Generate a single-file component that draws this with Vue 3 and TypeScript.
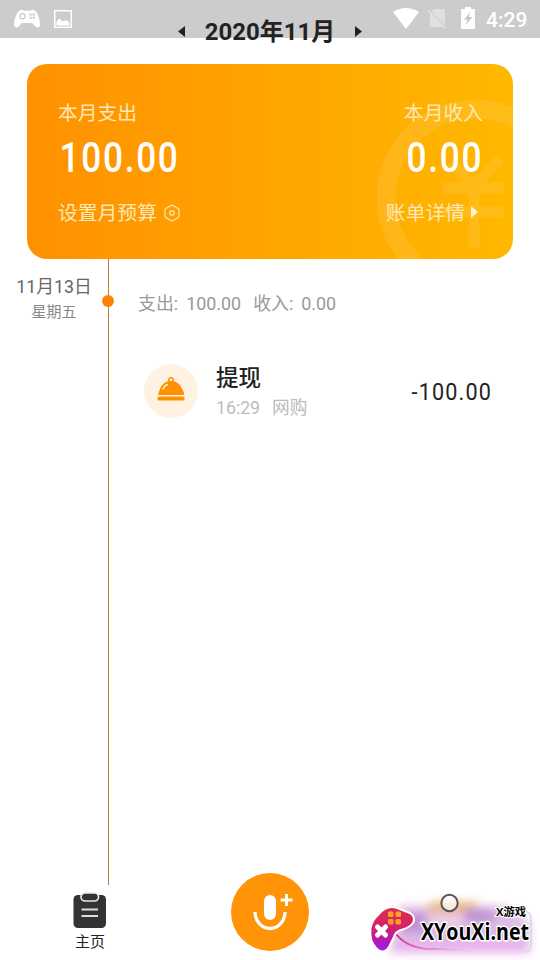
<script setup lang="ts">
interface Entry { title: string; time: string; category: string; amount: string }
const month = '2020年11月'
const entries: Entry[] = [{ title: '提现', time: '16:29', category: '网购', amount: '-100.00' }]
</script>

<template>
  <div class="screen">
    <header class="status">
      <div class="status-left">
        <svg width="28" height="20" viewBox="0 0 28 20"><path fill="#fff" d="M6 2Q7 .5 9 .8L11 1.800H17L19 .8Q21 .5 22.500 2C25 5 27 11 27 15.500C27 19 24 19.500 22 17L19 14H9L6 17C4 19.500 1 19 1 15.500C1 11 3 5 6 2Z"/><circle cx="9.500" cy="7.200" r="2.600" fill="none" stroke="#ccc" stroke-width="1.300"/><g fill="#ccc"><circle cx="17.500" cy="5.500" r="1.200"/><circle cx="20.800" cy="5.500" r="1.200"/><circle cx="17.500" cy="8.800" r="1.200"/><circle cx="20.800" cy="8.800" r="1.200"/></g></svg>
        <svg width="20" height="20" viewBox="0 0 20 20"><rect x="1.700" y="1.700" width="16.600" height="16.600" fill="none" stroke="#fff" stroke-width="1.500"/><path fill="#fff" d="M3.500 16.500V12.500L6.500 9.500L9.500 12.500L13 11L16.500 13.500V16.500Z"/></svg>
      </div>
      <div class="month">
        <svg width="7" height="11" viewBox="0 0 7 11"><path fill="#222" d="M7 0V11L0 5.500Z"/></svg>
        <h1>{{ month }}</h1>
        <svg width="7" height="11" viewBox="0 0 7 11"><path fill="#222" d="M0 0V11L7 5.500Z"/></svg>
      </div>
      <div class="status-right">
        <svg class="wifi" width="26" height="21" viewBox="0 0 26 21"><path fill="#fff" d="M0 4Q13-4 26 4L13 21Z"/></svg>
        <svg class="sim" width="20" height="21" viewBox="0 0 20 21"><path fill="#e0e0e0" d="M7 1H17Q18 1 18 2V17L4.500 3.500ZM3 5L17 19H4Q3 19 3 18Z"/><path d="M1 2L18 20" stroke="#e0e0e0" stroke-width="1.500"/></svg>
        <svg class="battery" width="14" height="22" viewBox="0 0 14 22"><path fill="#fff" d="M4 0H10V2H13Q14 2 14 3V21Q14 22 13 22H1Q0 22 0 21V3Q0 2 1 2H4Z"/><path fill="#c4c4c4" d="M9.500 5L3 12.500H6.500L4.500 18L11.500 10H7.800Z"/></svg>
        <span>4:29</span>
      </div>
    </header>

    <section class="card">
      <svg class="coin" width="140" height="160" viewBox="0 0 140 160"><circle cx="98" cy="99" r="89" fill="none" stroke="#fff" stroke-width="19"/><path d="M74 63L97 87L123 60M66 89H127M66 113H127M97 87V149" fill="none" stroke="#fff" stroke-width="11"/></svg>
      <div class="card-col">
        <p>本月支出</p>
        <svg class="sum" width="122" height="42" viewBox="0 0 122 42"><text transform="translate(1.500 36) scale(.84 1)">100.00</text></svg>
        <p class="link">设置月预算<svg class="gear" width="18" height="18" viewBox="0 0 18 18"><path d="M8 1.500Q9 1 10 1.500L15 4.300Q16 5 16 6V12Q16 13 15 13.700L10 16.500Q9 17 8 16.500L3 13.700Q2 13 2 12V6Q2 5 3 4.300Z"/><circle cx="9" cy="9" r="2.200"/></svg></p>
      </div>
      <div class="card-col right">
        <p>本月收入</p>
        <svg class="sum" width="78" height="42" viewBox="0 0 78 42"><text transform="translate(1.500 36) scale(.84 1)">0.00</text></svg>
        <p class="link">账单详情<svg class="more" width="7" height="12" viewBox="0 0 7 12"><path fill="#fff4d5" d="M0 0L7 6L0 12Z"/></svg></p>
      </div>
    </section>

    <main class="timeline">
      <aside class="day"><strong>11月13日</strong><span>星期五</span></aside>
      <div class="axis"><i></i></div>
      <section class="records">
        <div class="totals"><span>支出:</span><span>100.00</span><span class="income">收入:</span><span>0.00</span></div>
        <article v-for="entry in entries" :key="entry.time" class="entry">
          <div class="avatar"><svg width="28" height="24" viewBox="0 0 28 24"><circle cx="14" cy="3" r="2.200" fill="none" stroke="#ff9100" stroke-width="1.500"/><path fill="#ff9100" d="M1 18Q2 14 3 12Q6 4 14 4T25 12Q27 14 27 18Z"/><rect x=".5" y="19.500" width="27" height="4" rx="1.500" fill="#ff9100"/><path d="M6 12Q7.500 8.500 10.500 7.500" fill="none" stroke="#fff2df" stroke-width="1.400" stroke-linecap="round"/></svg></div>
          <div class="detail"><h2>{{ entry.title }}</h2><p><span>{{ entry.time }}</span><span>{{ entry.category }}</span></p></div>
          <svg class="price" width="82" height="28" viewBox="0 0 82 28"><text transform="translate(1.500 22) scale(.9 1)">{{ entry.amount }}</text></svg>
        </article>
      </section>
    </main>

    <nav class="tabs">
      <a class="home">
        <svg width="34" height="37" viewBox="0 0 34 37"><rect x=".5" y="3" width="32.500" height="33" rx="4.500" fill="#333335"/><rect x="8" y="1" width="17.500" height="8" rx="4" fill="#333335" stroke="#e8e8e8" stroke-width="1.700"/><path d="M8.500 17.500H25M8.500 24H25" stroke="#ddd" stroke-width="2"/></svg>
        <span>主页</span>
      </a>
      <button class="voice" aria-label="add"><svg width="78" height="78" viewBox="0 0 78 78"><rect x="33" y="22" width="12" height="25" rx="6" fill="#fff"/><path d="M24 39A15 16.500 0 0 0 54 39" fill="none" stroke="#fff" stroke-width="3.300"/><path d="M55.500 21V33M49.500 27H61.500" stroke="#fff" stroke-width="2.800"/></svg></button>
      <div class="profile">
        <svg width="180" height="80" viewBox="0 0 180 80">
          <defs>
            <filter id="soft" x="-20%" y="-50%" width="140%" height="200%"><feGaussianBlur stdDeviation="5"/></filter>
            <linearGradient id="pad" x1="0" y1="0" x2="0" y2="1"><stop offset="0" stop-color="#dc304b"/><stop offset=".45" stop-color="#d6206a"/><stop offset="1" stop-color="#9a18f0"/></linearGradient>
            <linearGradient id="line"><stop offset="0" stop-color="#d22c78"/><stop offset="1" stop-color="#e6a5f5" stop-opacity="0"/></linearGradient>
          </defs>
          <g filter="url(#soft)"><path fill="#dfbde6" d="M40 26H145L170 42V73H30L34 50Z"/><path fill="#eab477" d="M72 22H117V32H65Z"/><path fill="#bd93d6" d="M42 33H66V53H42ZM104 29H134V43H104Z"/><path fill="#e7b2ed" d="M40 59H164V73H30Z"/><path fill="#f1cfdf" d="M70 35H104V46H70Z"/></g>
          <path d="M165 31Q171 32 171 39V65Q171 72 164 72" fill="none" stroke="#ddd4df" stroke-width="1.500"/>
          <circle cx="89.500" cy="23" r="8.200" fill="#fff" fill-opacity=".65" stroke="#59565a" stroke-width="2"/>
          <path d="M36 54Q48 69 72 69T115 72" fill="none" stroke="url(#line)" stroke-width="2"/>
          <path fill="url(#pad)" stroke="#fff" stroke-width="2" stroke-linejoin="round" d="M19 34Q26 25 36 27.500L50 33Q56 37 53 43Q49 48 41 50Q35 52 34 57L29 67Q24 75 17 69Q9 62 10.500 48Q12 40 19 34Z"/>
          <g fill="#ffa126"><rect x="28" y="31.500" width="5.500" height="5.500" rx="1.500"/><rect x="35.500" y="31.500" width="5.500" height="5.500" rx="1.500"/><rect x="28" y="39" width="5.500" height="5.500" rx="1.500"/><rect x="35.500" y="39" width="5.500" height="5.500" rx="1.500"/></g>
          <path d="M17.500 47L25.500 55M25.500 47L17.500 55" stroke="#fff" stroke-width="5" stroke-linecap="round"/>
          <text class="brand" x="61" y="60" textLength="108" lengthAdjust="spacingAndGlyphs">XYouXi.net</text>
          <text class="brand-small" x="136" y="36" textLength="30" lengthAdjust="spacingAndGlyphs">X游戏</text>
        </svg>
      </div>
    </nav>
  </div>
</template>

<style>
body { margin: 0; background: #fff; }
</style>
<style scoped>
* { box-sizing: border-box; }
.screen { width: 540px; height: 960px; display: flex; flex-direction: column; overflow: hidden; background: #fff; font-family: Roboto, "Noto Sans CJK SC", sans-serif; }
p, h1, h2 { margin: 0; font-weight: 400; }
svg { display: block; flex: none; }
.status { height: 38px; flex: none; display: grid; grid-template-columns: 170px 200px 170px; background: #ccc; }
.status-left { display: flex; gap: 12px; padding: 9px 0 0 13px; }
.month { height: 63px; display: flex; align-items: center; justify-content: center; gap: 20px; }
.month h1 { margin-top: 1px; font-size: 24px; line-height: 28px; font-weight: 700; color: #222; white-space: nowrap; }
.status-right { display: flex; padding: 8px 0 0 23px; color: #fff; font-size: 21px; font-weight: 500; line-height: 24px; }
.sim { margin-left: 8px; }
.battery { margin: -1px 11px 0 14px; }
.card { position: relative; width: 486px; height: 195px; flex: none; margin: 26px 0 0 27px; padding: 36px 30px 0 31px; display: flex; justify-content: space-between; border-radius: 20px; overflow: hidden; background: linear-gradient(90deg, #ff9100, #ffb800); color: #ffe7b8; }
.coin { position: absolute; right: -4px; top: 35px; opacity: .09; }
.card-col { position: relative; display: flex; flex-direction: column; }
.card-col p { height: 28px; font-size: 19.800px; line-height: 28px; white-space: nowrap; }
.right { align-items: flex-end; }
.sum { margin-top: 8px; overflow: visible; }
.sum text { font: 500 42px Roboto, sans-serif; letter-spacing: 2px; fill: #fff; }
.card-col .link { display: flex; align-items: center; margin-top: 22px; }
.gear { margin: 0 0 2px 6px; }
.gear path, .gear circle { fill: none; stroke: #ffe0a5; stroke-width: 1.400; }
.more { margin: 0 5px 4px 6px; }
.timeline { height: 626px; flex: none; display: grid; grid-template-columns: 102px 12px 1fr; }
.day { display: flex; flex-direction: column; align-items: center; padding: 15px 0 0 6px; color: #666; }
.day strong { font-size: 17.800px; line-height: 26px; font-weight: 400; }
.day span { font-size: 15px; line-height: 24px; color: #888; }
.axis { display: flex; justify-content: center; padding-top: 36px; background: linear-gradient(#bd8136, #bd8136) 6px 0 / 1px 100% no-repeat; }
.axis i { width: 12px; height: 12px; border-radius: 50%; background: #ff8105; }
.records { padding: 32px 0 0 24px; }
.totals { display: flex; gap: 8px; font-size: 17.900px; line-height: 26px; color: #999; }
.income { margin-left: 4px; }
.entry { display: flex; margin-top: 47px; padding-left: 6px; width: 354px; }
.avatar { width: 54px; height: 54px; display: grid; place-items: center; padding-bottom: 5px; border-radius: 50%; background: #fff2e3; }
.detail { margin-left: 18px; }
.detail h2 { font-size: 22.500px; line-height: 28px; font-weight: 500; color: #222; }
.detail p { display: flex; gap: 12px; margin-top: 3px; color: #bbb; font-size: 17.700px; line-height: 26px; }
.price { margin: 14px 0 0 auto; overflow: visible; }
.price text { font: 400 24px Roboto, sans-serif; letter-spacing: 1.300px; fill: #222; }
.tabs { height: 75px; display: grid; grid-template-columns: 180px 180px 180px; }
.home { display: flex; flex-direction: column; align-items: center; padding-top: 7px; color: #222; }
.home span { margin-top: 2px; font-size: 15px; line-height: 22px; }
.voice { width: 78px; height: 78px; padding: 0; border: 0; border-radius: 50%; margin: -12px auto 0; background: #ff9408; }
.profile { margin-top: -5px; }
.profile svg { overflow: visible; }
.brand { font: 700 24px "Open Sans", sans-serif; fill: #000; stroke: #fff; stroke-width: 3px; paint-order: stroke; stroke-linejoin: round; }
.brand-small { font: 700 11px "Open Sans", "Noto Sans CJK SC", sans-serif; fill: #000; stroke: #fff; stroke-width: 2px; paint-order: stroke; }
</style>
